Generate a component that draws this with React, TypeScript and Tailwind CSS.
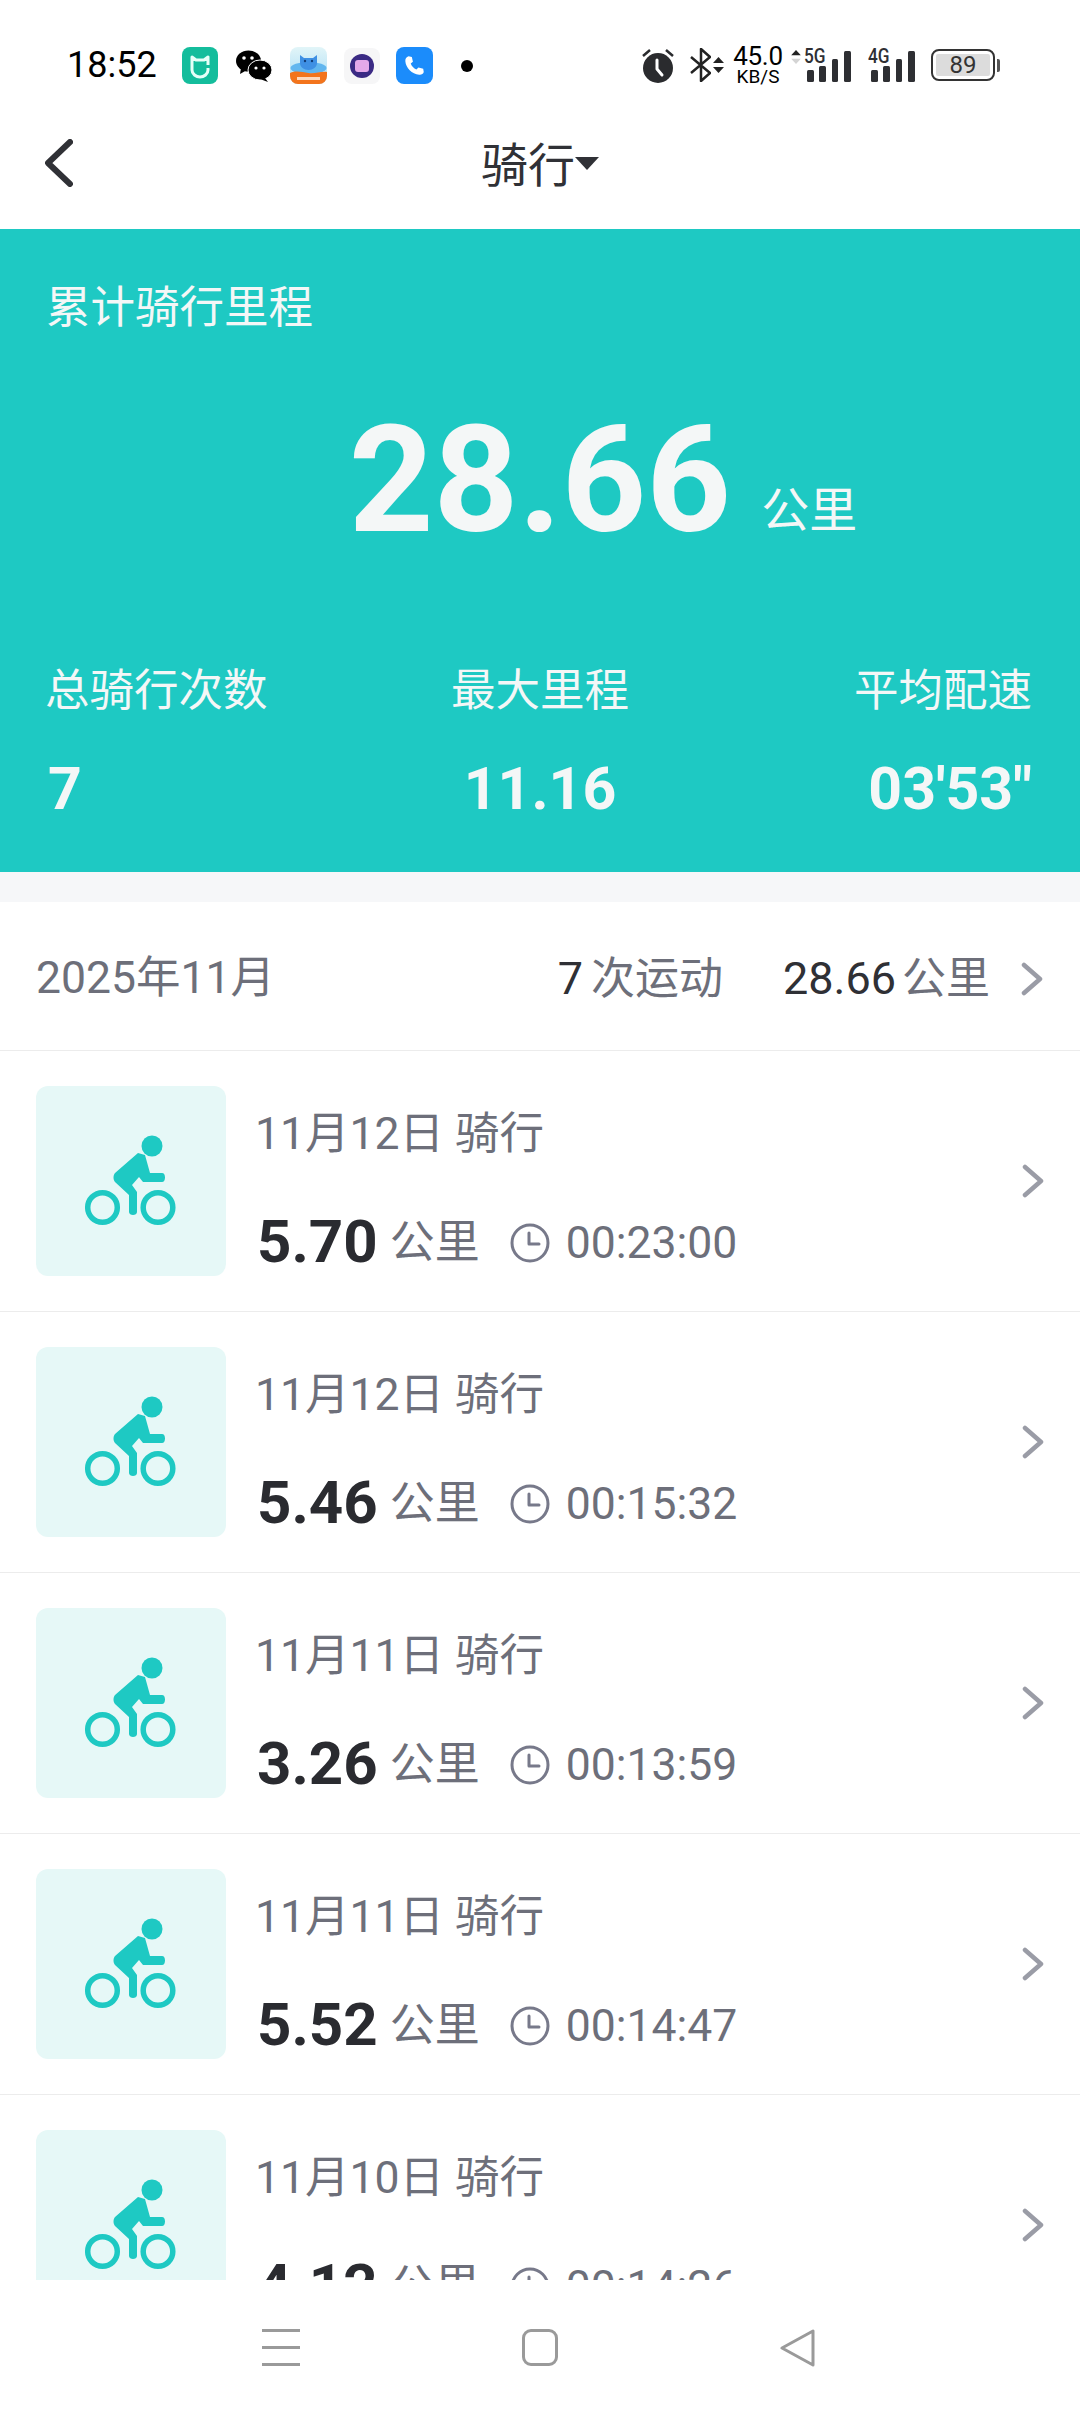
import React from "react";

const rides = [
  { date: "11月12日 骑行", km: "5.70", time: "00:23:00" },
  { date: "11月12日 骑行", km: "5.46", time: "00:15:32" },
  { date: "11月11日 骑行", km: "3.26", time: "00:13:59" },
  { date: "11月11日 骑行", km: "5.52", time: "00:14:47" },
  { date: "11月10日 骑行", km: "4.12", time: "00:14:26" },
];

const stats = [
  { label: "总骑行次数", value: "7", align: "items-start", nudge: "-ml-[3px]" },
  { label: "最大里程", value: "11.16", align: "items-center", nudge: "" },
  { label: "平均配速", value: "03'53\"", align: "items-end", nudge: "" },
];

function Chevron({ className }: { className?: string }) {
  return (
    <svg viewBox="0 0 22 34" className={className} fill="none" stroke="#9a9ca6" strokeWidth="4.5" strokeLinecap="round" strokeLinejoin="round">
      <path d="M3 3l16 14L3 31" />
    </svg>
  );
}

function BikeIcon() {
  return (
    <svg viewBox="0 0 190 190" className="h-[190px] w-[190px]" fill="#1ec9c3">
      <circle cx="116" cy="60" r="10.500" />
      <path d="M102 67l7 2 5 18h12c2 0 3 2 3 4.500s-1 4.500-3 4.500h-19l-4-5-7 8 5 7v20c0 2-2 3-4 3s-4-1-4-3v-17L79 96c-2-2-2-7 0-9z" />
      <circle cx="66.500" cy="121.500" r="14.800" fill="none" stroke="#1ec9c3" strokeWidth="5.500" />
      <circle cx="122" cy="121.500" r="14.800" fill="none" stroke="#1ec9c3" strokeWidth="5.500" />
    </svg>
  );
}

function ClockIcon() {
  return (
    <svg viewBox="0 0 40 40" className="h-[40px] w-[40px] shrink-0" fill="none" stroke="#77798a" strokeWidth="3" strokeLinecap="round" strokeLinejoin="round">
      <circle cx="20" cy="20" r="18" />
      <path d="M19 10v11h10" />
    </svg>
  );
}

function RideRow({ date, km, time }: { date: string; km: string; time: string }) {
  return (
    <div className="relative flex h-[261px] shrink-0 border-b border-[#ececec] pl-9 pt-[35px]">
      <div className="h-[190px] w-[190px] shrink-0 rounded-[12px] bg-[#e6f8f7]">
        <BikeIcon />
      </div>
      <div className="ml-[31px] flex flex-col pt-[23px]">
        <div className="-ml-[2px] h-[50px] text-[44.5px] leading-[50px] text-[#6d6f7a]">{date}</div>
        <div className="mt-[48px] flex h-[70px] items-center">
          <span className="text-[60px] font-bold leading-[70px] text-[#2a2b30]">{km}</span>
          <span className="ml-[12px] mt-[2px] text-[45px] leading-[70px] text-[#6d6f7a]">公里</span>
          <span className="ml-[30px] mt-[2px]"><ClockIcon /></span>
          <span className="ml-[16px] mt-[2px] text-[44.5px] leading-[70px] text-[#6d6f7a]">{time}</span>
        </div>
      </div>
      <Chevron className="absolute right-[36px] top-[113px] h-[34px] w-[22px]" />
    </div>
  );
}

function StatusLeftIcons() {
  return (
    <div className="ml-[25px] flex items-center">
      <svg viewBox="0 0 36 37" className="h-[37px] w-[36px] shrink-0">
        <rect width="36" height="37" rx="8" fill="#14bd9c" />
        <path d="M10 10l4 3h8l4-3v13c0 4-4 7-8 7s-8-3-8-7z" fill="none" stroke="#e6fff8" strokeWidth="3" strokeLinejoin="round" strokeDasharray="26 3 40" />
      </svg>
      <svg viewBox="0 0 36 32" className="ml-[18px] h-[32px] w-[36px] shrink-0">
        <ellipse cx="12.500" cy="11" rx="12.500" ry="10.500" fill="#000" />
        <path d="M5 18l-1 6 7-4z" fill="#000" />
        <ellipse cx="24" cy="20" rx="12" ry="10" fill="#000" stroke="#fff" strokeWidth="1" />
        <path d="M29 28l3 4-8-3z" fill="#000" />
        <circle cx="8" cy="8" r="1.800" fill="#fff" />
        <circle cx="16" cy="8" r="1.800" fill="#fff" />
        <circle cx="20" cy="18" r="1.600" fill="#fff" />
        <circle cx="28" cy="18" r="1.600" fill="#fff" />
      </svg>
      <svg viewBox="0 0 37 37" className="ml-[18px] h-[37px] w-[37px] shrink-0">
        <defs>
          <linearGradient id="sky" x1="0" y1="0" x2="0" y2="1">
            <stop offset="0" stopColor="#e2f5f8" />
            <stop offset="1" stopColor="#a9dcf6" />
          </linearGradient>
        </defs>
        <rect width="37" height="37" rx="8" fill="url(#sky)" />
        <ellipse cx="18.500" cy="21" rx="18" ry="6" fill="#62b6ef" />
        <path d="M10 8l4 3h9l4-3v8c0 4-4 7-8.500 7S10 20 10 16z" fill="#3f90e4" />
        <circle cx="15" cy="14" r="1.200" fill="#123d77" />
        <circle cx="22" cy="14" r="1.200" fill="#123d77" />
        <path d="M0 26c6-3 12-1 18.500 0S31 24 37 25v4a8 8 0 0 1-8 8H8a8 8 0 0 1-8-8z" fill="#f3741c" />
        <rect x="7" y="30" width="23" height="3" fill="#ffd9bc" />
      </svg>
      <div className="ml-[17px] flex h-[36px] w-[36px] shrink-0 items-center justify-center rounded-[8px] bg-[#f6f6f7]">
        <div className="flex h-[24px] w-[24px] items-center justify-center rounded-full bg-[#3b2a84]">
          <div className="h-[12px] w-[14px] rounded-[3px] bg-[#e5a9ea]" />
        </div>
      </div>
      <div className="ml-[16px] flex h-[37px] w-[37px] shrink-0 items-center justify-center rounded-[8px] bg-[#1b8cfb]">
        <svg viewBox="0 0 24 24" className="h-[26px] w-[26px]" fill="#fff">
          <path d="M7 3l3 .6 1 4.400-2 1.800c.8 2.400 2.800 4.600 5.200 5.400l1.900-1.900 4.400 1.200.5 3c-.5 1.800-2.300 2.800-4.200 2.500C10 19.400 4.500 13.500 4 7.500 3.800 5.300 5 3.500 7 3z" />
        </svg>
      </div>
      <div className="ml-[28px] h-[12px] w-[12px] rounded-full bg-black" />
    </div>
  );
}

function SignalBars({ className }: { className?: string }) {
  return (
    <svg viewBox="0 0 44 31" className={className} fill="#2e2f33">
      <rect x="0" y="19" width="7" height="12" rx="1.500" />
      <rect x="12" y="15" width="7" height="16" rx="1.500" />
      <rect x="25" y="8" width="6" height="23" rx="1.500" />
      <rect x="37" y="0" width="7" height="31" rx="1.500" />
    </svg>
  );
}

function UpDown({ className, dim }: { className?: string; dim?: boolean }) {
  return (
    <svg viewBox="0 0 11 16" className={className}>
      <path d="M5.500 0L11 6H0z" fill="#222" />
      <path d="M5.500 16L11 10H0z" fill={dim ? "#d4d4d4" : "#222"} />
    </svg>
  );
}

function StatusRightIcons() {
  return (
    <div className="flex items-center">
      <svg viewBox="0 0 32 35" className="h-[35px] w-[32px] shrink-0" fill="none">
        <circle cx="16" cy="20" r="15" fill="#2a2b2e" />
        <path d="M15 12v9l5 6" stroke="#fff" strokeWidth="3" strokeLinecap="round" strokeLinejoin="round" />
        <path d="M1 8l7-6M31 8l-7-6" stroke="#2a2b2e" strokeWidth="2.500" />
      </svg>
      <svg viewBox="0 0 21 34" className="ml-[16px] h-[34px] w-[21px] shrink-0" fill="none" stroke="#222" strokeWidth="2.500">
        <path d="M1 9l19 16-9 8V1l9 8L1 25" strokeLinejoin="round" />
      </svg>
      <UpDown className="ml-[2px] h-[16px] w-[11px] shrink-0" />
      <div className="ml-[9px] flex w-[50px] shrink-0 flex-col items-center">
        <span className="h-[20px] text-[26px] leading-[20px] tracking-[-0.3px] text-black">45.0</span>
        <span className="mt-[3px] h-[15px] text-[19px] leading-[15px] text-black">KB/S</span>
      </div>
      <div className="relative ml-[8px] h-[32px] w-[60px] shrink-0">
        <UpDown className="absolute left-0 top-[1px] h-[14px] w-[10px]" dim />
        <span className="absolute left-[13px] top-[0px] origin-left scale-x-[0.82] text-[21px] font-medium leading-[15px] text-[#2e2f33]">5G</span>
        <SignalBars className="absolute left-[16px] top-[2px] h-[31px] w-[44px]" />
      </div>
      <div className="relative ml-[17px] h-[32px] w-[47px] shrink-0">
        <span className="absolute left-0 top-[0px] origin-left scale-x-[0.82] text-[21px] font-medium leading-[15px] text-[#2e2f33]">4G</span>
        <SignalBars className="absolute left-[3px] top-[2px] h-[31px] w-[44px]" />
      </div>
      <div className="ml-[16px] flex h-[32px] w-[64px] shrink-0 items-center justify-center rounded-[8px] border-[2px] border-[#333] p-[3px]">
        <div className="flex h-full w-full items-center justify-center rounded-[2px] bg-[#dcdcdc] text-[24px] leading-none text-[#333]">89</div>
      </div>
      <div className="ml-[2px] h-[13px] w-[3px] shrink-0 rounded-r-[2px] bg-[#555]" />
    </div>
  );
}

export default function App() {
  return (
    <div className="flex h-[2414px] w-[1080px] flex-col overflow-hidden bg-white font-[Roboto,'Noto_Sans_CJK_SC',sans-serif]">
      {/* status bar */}
      <div className="flex h-[84px] shrink-0 items-end justify-between pl-[67px] pr-[80px]">
        <div className="flex h-[37px] items-center">
          <span className="text-[36px] leading-[37px] text-black">18:52</span>
          <StatusLeftIcons />
        </div>
        <StatusRightIcons />
      </div>

      {/* title bar */}
      <div className="relative flex h-[145px] shrink-0 items-center justify-center pt-[19px]">
        <svg viewBox="0 0 28 48" className="absolute left-[45px] top-[55px] h-[48px] w-[28px]" fill="none" stroke="#303136" strokeWidth="6" strokeLinecap="round" strokeLinejoin="round">
          <path d="M25 3L3 24l22 21" />
        </svg>
        <span className="text-[47px] leading-[56px] text-[#303136]">骑行</span>
        <div className="mb-[6px] h-0 w-0 border-x-[12px] border-t-[13px] border-x-transparent border-t-[#303136]" />
      </div>

      {/* summary */}
      <div className="flex shrink-0 flex-col bg-[#1ec9c3] px-[48px] pb-[53px] pt-[55px] text-[#f4f7f7]">
        <div className="-ml-[2px] h-[48px] text-[44.5px] leading-[48px]">累计骑行里程</div>
        <div className="mt-[74px] grid h-[150px] grid-cols-[1fr_auto_1fr] items-end">
          <span />
          <span className="text-[148px] font-bold leading-[150px]">28.66</span>
          <span className="mb-[20px] ml-[30px] text-[48px] leading-[50px]">公里</span>
        </div>
        <div className="mt-[111px] flex justify-between">
          {stats.map(({ label, value, align, nudge }) => (
            <div key={label} className={`flex w-[300px] flex-col ${align}`}>
              <span className={`h-[48px] text-[44.5px] leading-[48px] ${nudge}`}>{label}</span>
              <span className="mt-[44px] h-[60px] text-[59px] font-bold leading-[60px]">{value}</span>
            </div>
          ))}
        </div>
      </div>

      <div className="h-[30px] shrink-0 bg-[#f6f7f9]" />

      {/* ride list */}
      <div className="flex min-h-0 flex-1 flex-col overflow-hidden">
        <div className="flex h-[149px] shrink-0 items-center border-b border-[#ececec] pl-9 pr-[37px] pt-[5px]">
          <span className="text-[44.5px] text-[#6d6f7a]">2025年11月</span>
          <span className="ml-auto text-[45px] text-[#2f3035]">7</span>
          <span className="ml-[8px] text-[44px] text-[#6d6f7a]">次运动</span>
          <span className="ml-[60px] text-[45px] text-[#2f3035]">28.66</span>
          <span className="ml-[6px] text-[44px] text-[#6d6f7a]">公里</span>
          <Chevron className="ml-[31px] h-[34px] w-[22px]" />
        </div>
        {rides.map((r, i) => (
          <RideRow key={i} date={r.date} km={r.km} time={r.time} />
        ))}
      </div>

      {/* nav bar */}
      <div className="flex h-[134px] shrink-0 bg-white pl-[262px] pt-[49px]">
        <div className="flex h-[37px] w-[38px] flex-col justify-between">
          <div className="h-[3px] bg-[#9a9a9a]" />
          <div className="h-[3px] bg-[#9a9a9a]" />
          <div className="h-[3px] bg-[#9a9a9a]" />
        </div>
        <div className="ml-[222px] h-[37px] w-[36px] rounded-[9px] border-[3px] border-[#9a9a9a]" />
        <svg viewBox="0 0 36 38" className="ml-[222px] h-[38px] w-[36px]" fill="none" stroke="#9a9a9a" strokeWidth="3" strokeLinejoin="round">
          <path d="M33 2v34L2 19z" />
        </svg>
      </div>
    </div>
  );
}
